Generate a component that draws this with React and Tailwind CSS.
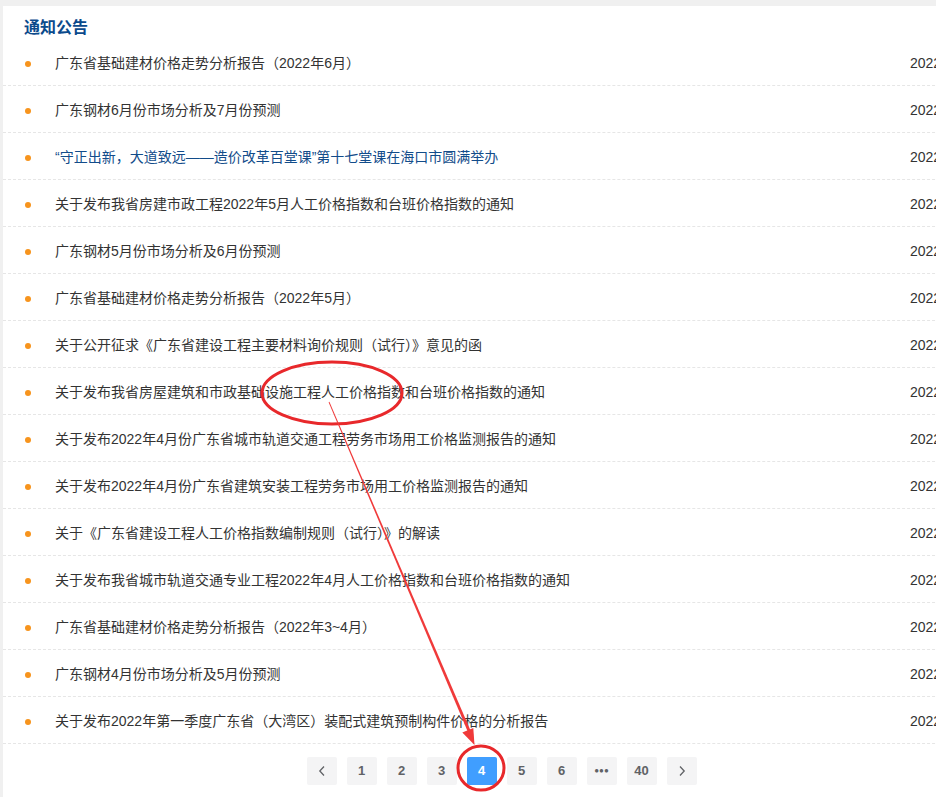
import React from "react";

const items = [
  { t: "广东省基础建材价格走势分析报告（2022年6月）", d: "2022-06-30" },
  { t: "广东钢材6月份市场分析及7月份预测", d: "2022-06-30" },
  { t: "“守正出新，大道致远——造价改革百堂课”第十七堂课在海口市圆满举办", d: "2022-06-27", v: true },
  { t: "关于发布我省房建市政工程2022年5月人工价格指数和台班价格指数的通知", d: "2022-06-22" },
  { t: "广东钢材5月份市场分析及6月份预测", d: "2022-06-01" },
  { t: "广东省基础建材价格走势分析报告（2022年5月）", d: "2022-05-31" },
  { t: "关于公开征求《广东省建设工程主要材料询价规则（试行）》意见的函", d: "2022-05-27" },
  { t: "关于发布我省房屋建筑和市政基础设施工程人工价格指数和台班价格指数的通知", d: "2022-05-26" },
  { t: "关于发布2022年4月份广东省城市轨道交通工程劳务市场用工价格监测报告的通知", d: "2022-05-24" },
  { t: "关于发布2022年4月份广东省建筑安装工程劳务市场用工价格监测报告的通知", d: "2022-05-24" },
  { t: "关于《广东省建设工程人工价格指数编制规则（试行）》的解读", d: "2022-05-20" },
  { t: "关于发布我省城市轨道交通专业工程2022年4月人工价格指数和台班价格指数的通知", d: "2022-05-20" },
  { t: "广东省基础建材价格走势分析报告（2022年3~4月）", d: "2022-05-06" },
  { t: "广东钢材4月份市场分析及5月份预测", d: "2022-05-05" },
  { t: "关于发布2022年第一季度广东省（大湾区）装配式建筑预制构件价格的分析报告", d: "2022-04-29" },
];

const pages = ["<", "1", "2", "3", "4", "5", "6", "•••", "40", ">"];

function Chevron({ dir }) {
  return (
    <svg width="10" height="12" viewBox="0 0 10 12" fill="none">
      {dir === "left" ? (
        <path d="M7 1.5 L2.8 6 L7 10.5" stroke="#606266" strokeWidth="1.3" />
      ) : (
        <path d="M3 1.5 L7.2 6 L3 10.5" stroke="#606266" strokeWidth="1.3" />
      )}
    </svg>
  );
}

export default function App() {
  return (
    <div
      className="relative w-[936px] h-[797px] overflow-hidden bg-[#f0f0f0] pt-[6px] pl-[3px]"
      style={{ fontFamily: '"Liberation Sans", Arial, "Noto Sans CJK SC", sans-serif' }}
    >
      <div className="w-[997px] h-[900px] bg-white">
        <div className="h-[33px] pt-[12px] pl-[21px]">
          <div className="leading-[20px] text-[16px] font-bold text-[#0b4a8c]">通知公告</div>
        </div>
        <ul>
          {items.map((it, i) => (
            <li
              key={i}
              className="flex items-center h-[47px] pt-[3px] border-b border-dashed border-[#e6e6e6]"
            >
              <span className="ml-[22px] w-[6px] h-[6px] rounded-full bg-[#f7941d] shrink-0" />
              <span
                className={
                  "ml-[24px] flex-1 text-[14px] whitespace-nowrap " +
                  (it.v ? "text-[#124c8a]" : "text-[#333333]")
                }
              >
                {it.t}
              </span>
              <span className="w-[90px] shrink-0 text-[14px] text-[#333333]">{it.d}</span>
            </li>
          ))}
        </ul>
        <div className="flex justify-center gap-[10px] mt-[13px]">
          {pages.map((p, i) => {
            const active = p === "4";
            return (
              <div
                key={i}
                className={
                  "w-[30px] h-[28px] rounded-[2px] flex items-center justify-center text-[13px] font-bold " +
                  (active ? "bg-[#409eff] text-white" : "bg-[#f4f4f5] text-[#606266]")
                }
              >
                {p === "<" ? (
                  <Chevron dir="left" />
                ) : p === ">" ? (
                  <Chevron dir="right" />
                ) : p === "•••" ? (
                  <span className="text-[8px] tracking-[0px] leading-none">●●●</span>
                ) : (
                  p
                )}
              </div>
            );
          })}
        </div>
      </div>
      <svg
        className="absolute left-0 top-0 pointer-events-none"
        width="936"
        height="797"
        viewBox="0 0 936 797"
      >
        <ellipse cx="332" cy="393" rx="70" ry="31" fill="none" stroke="#e8282b" strokeWidth="3" />
        <polygon
          points="329.4,401.8 328.6,402.2 469.4,735.6 472.2,734.4"
          fill="#f03a3a"
        />
        <polygon points="474.5,745 473.3,728 462.3,732.6" fill="#f03a3a" />
        <ellipse cx="481" cy="768" rx="23" ry="22" fill="none" stroke="#e8282b" strokeWidth="3" />
      </svg>
    </div>
  );
}
